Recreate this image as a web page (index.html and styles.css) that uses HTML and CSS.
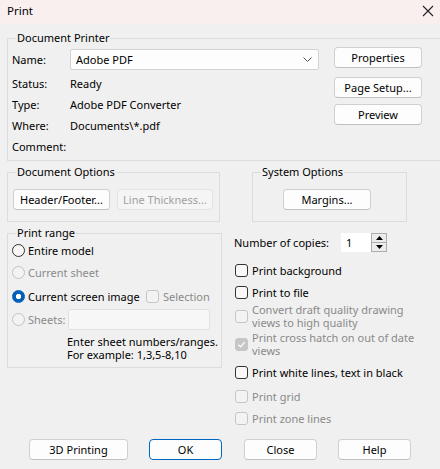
FILE: index.html
```html
<!DOCTYPE html>
<html>
<head>
<meta charset="utf-8">
<link rel="stylesheet" href="styles.css">
</head>
<body>
<div class="titlebar">
  <span class="title">Print</span>
  <svg class="close" width="12" height="12" viewBox="0 0 12 12"><path d="M1 1 L11 11 M11 1 L1 11" stroke="#222" stroke-width="1.1" fill="none"/></svg>
</div>
<div class="content">
  <div class="group g-printer">
    <span class="legend">Document Printer</span>
    <div class="dp-left">
      <div class="name-row">
        <span class="lbl">Name:</span>
        <div class="combo"><span>Adobe PDF</span><svg class="chev" width="9" height="5" viewBox="0 0 9 5"><path d="M0.5 0.5 L4.5 4.5 L8.5 0.5" stroke="#555" stroke-width="1" fill="none"/></svg></div>
      </div>
      <div class="info-row"><span class="lbl">Status:</span><span>Ready</span></div>
      <div class="info-row"><span class="lbl">Type:</span><span>Adobe PDF Converter</span></div>
      <div class="info-row"><span class="lbl">Where:</span><span>Documents\*.pdf</span></div>
      <div class="info-row"><span class="lbl">Comment:</span><span></span></div>
    </div>
    <div class="dp-right">
      <div class="btn b-prop">Properties</div>
      <div class="btn b-setup">Page Setup...</div>
      <div class="btn b-prev">Preview</div>
    </div>
  </div>

  <div class="opt-row">
    <div class="group g-docopt">
      <span class="legend">Document Options</span>
      <div class="btn b-hf">Header/Footer...</div>
      <div class="btn b-lt disabled">Line Thickness...</div>
    </div>
    <div class="group g-sysopt">
      <span class="legend">System Options</span>
      <div class="btn b-margins">Margins...</div>
    </div>
  </div>

  <div class="main-row">
    <div class="group g-range">
      <span class="legend">Print range</span>
      <div class="r-row r1"><span class="radio"></span><span class="rtext">Entire model</span></div>
      <div class="r-row r2 dim"><span class="radio dis"></span><span class="rtext">Current sheet</span></div>
      <div class="r-row r3">
        <div class="r-item w-screen"><span class="radio on"></span><span class="rtext">Current screen image</span></div>
        <span class="cb dis"></span><span class="ctext dim">Selection</span>
      </div>
      <div class="r-row r4">
        <div class="r-item w-sheets dim"><span class="radio dis"></span><span class="rtext">Sheets:</span></div>
        <div class="tbox"></div>
      </div>
      <div class="note">Enter sheet numbers/ranges.<br>For example: 1,3,5-8,10</div>
    </div>

    <div class="right-col">
      <div class="copies">
        <span class="clabel">Number of copies:</span>
        <div class="spin">
          <div class="spin-field">1</div>
          <div class="spin-btns">
            <div class="sb"><svg width="7" height="4" viewBox="0 0 7 4"><path d="M0 4 L3.5 0 L7 4 Z" fill="#000"/></svg></div>
            <div class="sb"><svg width="7" height="4" viewBox="0 0 7 4"><path d="M0 0 L3.5 4 L7 0 Z" fill="#000"/></svg></div>
          </div>
        </div>
      </div>
      <div class="c-row h22 first"><span class="cb"></span><span class="ctext">Print background</span></div>
      <div class="c-row h22"><span class="cb"></span><span class="ctext">Print to file</span></div>
      <div class="c-row h26 dim"><span class="cb dis"></span><span class="ctext multi">Convert draft quality drawing<br>views to high quality</span></div>
      <div class="c-row h30 dim"><span class="cb checked-dis"><svg width="11" height="11" viewBox="0 0 11 11"><path d="M2.5 5.8 L4.6 7.8 L8.6 3.2" stroke="#fff" stroke-width="1.2" fill="none"/></svg></span><span class="ctext multi">Print cross hatch on out of date<br>views</span></div>
      <div class="c-row h26"><span class="cb"></span><span class="ctext">Print white lines, text in black</span></div>
      <div class="c-row h22 dim"><span class="cb dis"></span><span class="ctext">Print grid</span></div>
      <div class="c-row h22 dim"><span class="cb dis"></span><span class="ctext">Print zone lines</span></div>
    </div>
  </div>

  <div class="footer">
    <div class="btn f-3d">3D Printing</div>
    <div class="btn f-ok default">OK</div>
    <div class="btn f-close">Close</div>
    <div class="btn f-help">Help</div>
  </div>
</div>
</body>
</html>
```

FILE: styles.css
```css
html, body {
  margin: 0;
  padding: 0;
}
body {
  width: 440px;
  height: 469px;
  overflow: hidden;
  background: #f0f0f0;
  font-family: "Noto Sans", "Open Sans", sans-serif;
  font-size: 11px;
  color: #000;
  white-space: nowrap;
}

.titlebar {
  height: 24px;
  background: #f9efef;
  display: flex;
  align-items: center;
  justify-content: space-between;
  padding: 0 6px 0 7px;
  box-sizing: border-box;
}
.title {
  font-size: 11.5px;
  line-height: 20px;
  margin-top: -3px;
}
.close {
  margin-top: -3px;
}

.content {
  padding-left: 7px;
}

.group {
  position: relative;
  border: 1px solid #dcdcdc;
  box-sizing: border-box;
}
.legend {
  position: absolute;
  top: -9px;
  left: 8px;
  padding: 0 1px;
  background: #f0f0f0;
  line-height: 16px;
}

/* Document Printer */
.g-printer {
  margin-top: 14px;
  width: 445px;
  height: 123px;
  display: flex;
}
.dp-left {
  width: 311px;
  padding-left: 4px;
  padding-top: 10px;
  box-sizing: border-box;
}
.name-row {
  display: flex;
  align-items: center;
  height: 21px;
}
.lbl {
  width: 58px;
  flex: none;
}
.combo {
  width: 249px;
  height: 21px;
  box-sizing: border-box;
  background: #fdfdfd;
  border: 1px solid #d3d3d3;
  border-radius: 2px;
  display: flex;
  align-items: center;
  justify-content: space-between;
  padding: 0 5px 0 5px;
}
.chev {
  margin-right: 1px;
}
.info-row {
  display: flex;
  align-items: center;
  height: 21px;
}
.name-row + .info-row {
  margin-top: 3px;
}

.dp-right {
  margin-left: 15px;
  padding-top: 8px;
}

.btn {
  box-sizing: border-box;
  height: 21px;
  background: #fdfdfd;
  border: 1px solid #d0d0d0;
  border-bottom-color: #c0c0c0;
  border-radius: 4px;
  display: flex;
  align-items: center;
  justify-content: center;
}
.btn.disabled {
  background: #f5f5f5;
  border-color: #e3e3e3;
  color: #a0a0a0;
}
.btn.default {
  border: 1px solid #0067c0;
}
.b-prop, .b-setup, .b-prev {
  width: 88px;
}
.b-setup {
  margin-top: 9px;
}
.b-prev {
  margin-top: 6px;
}

/* Options row */
.opt-row {
  display: flex;
  margin-top: 11px;
}
.g-docopt {
  width: 213px;
  height: 50px;
  display: flex;
  padding: 16px 0 0 5px;
}
.b-hf {
  width: 97px;
}
.b-lt {
  width: 96px;
  margin-left: 7px;
}
.g-sysopt {
  width: 155px;
  height: 50px;
  margin-left: 32px;
  padding: 16px 0 0 30px;
}
.b-margins {
  width: 88px;
}

/* Main row */
.main-row {
  display: flex;
  align-items: flex-start;
  margin-top: 11px;
}
.g-range {
  width: 215px;
  height: 135px;
  padding: 5px 0 0 4px;
}
.r-row {
  display: flex;
  align-items: center;
}
.r1 { height: 22px; }
.r2 { height: 23px; }
.r3 { height: 24px; }
.r4 { height: 22px; }
.r-item {
  display: flex;
  align-items: center;
  flex: none;
}
.w-screen { width: 134px; }
.w-sheets { width: 56px; }
.rtext {
  margin-left: 3px;
}
.dim {
  color: #8a8a8a;
}
.radio {
  width: 13px;
  height: 13px;
  box-sizing: border-box;
  border-radius: 50%;
  border: 1px solid #333;
  background: #f7f7f7;
  flex: none;
}
.radio.dis {
  border-color: #c2c2c2;
  background: #f3f3f3;
}
.radio.on {
  border-color: #005fb8;
  background: radial-gradient(circle, #fff 0 2.4px, #005fb8 3px);
}
.tbox {
  width: 142px;
  height: 21px;
  box-sizing: border-box;
  background: #f7f7f7;
  border: 1px solid #e2e2e2;
  border-radius: 2px;
}
.note {
  margin-top: 5px;
  padding-left: 55px;
  line-height: 13px;
}

.cb {
  width: 13px;
  height: 13px;
  box-sizing: border-box;
  border: 1px solid #333;
  border-radius: 3px;
  background: #f8f8f8;
  flex: none;
  display: flex;
  align-items: center;
  justify-content: center;
}
.cb.dis {
  border-color: #c6c6c6;
  background: #f3f3f3;
}
.cb.checked-dis {
  border-color: #c6c6c6;
  background: #c6c6c6;
}
.ctext {
  margin-left: 4px;
}
.ctext.multi {
  line-height: 13px;
}

/* Right column */
.right-col {
  margin-left: 12px;
  display: flex;
  flex-direction: column;
}
.copies {
  display: flex;
  align-items: center;
  height: 19px;
}
.clabel {
  width: 107px;
}
.spin {
  display: flex;
  height: 19px;
}
.spin-field {
  width: 30px;
  height: 19px;
  background: #fff;
  padding-left: 5px;
  box-sizing: border-box;
  line-height: 19px;
}
.spin-btns {
  width: 16px;
  height: 19px;
  box-sizing: border-box;
  border: 1px solid #adadad;
  background: #e8e8e8;
  display: flex;
  flex-direction: column;
}
.sb {
  flex: 1;
  display: flex;
  align-items: center;
  justify-content: center;
  background: #ececec;
}
.sb + .sb {
  border-top: 1px solid #adadad;
}
.c-row {
  display: flex;
  align-items: center;
  padding-left: 1px;
}
.c-row.first { margin-top: 7px; }
.h22 { height: 22px; }
.h26 { height: 26px; }
.h30 { height: 30px; }

/* Footer */
.footer {
  display: flex;
  margin-top: 10px;
  padding-left: 22px;
}
.f-3d { width: 99px; }
.f-ok { width: 73px; margin-left: 21px; }
.f-close { width: 73px; margin-left: 22px; }
.f-help { width: 73px; margin-left: 21px; }
```
